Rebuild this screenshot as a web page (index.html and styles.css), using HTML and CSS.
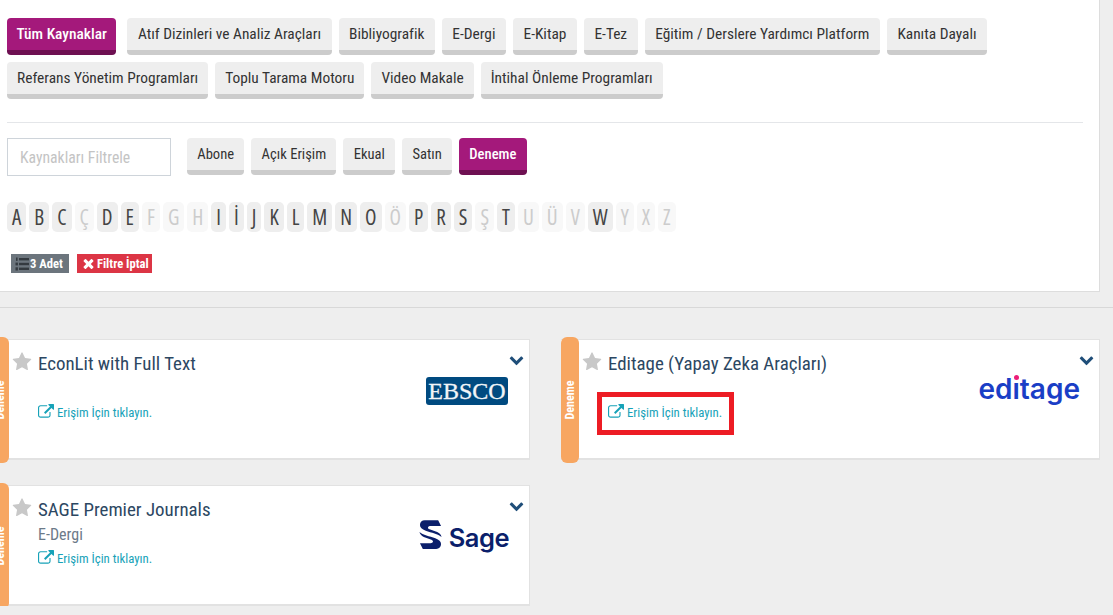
FILE: index.html
```html
<!DOCTYPE html>
<html lang="tr">
<head>
    <meta charset="UTF-8">
    <meta name="viewport" content="width=device-width, initial-scale=1.0">
    <title>Veri Tabanları</title>
    <link rel="stylesheet" href="styles.css">
</head>
<body>
    <svg class="icon-defs" aria-hidden="true">
        <symbol id="i-star" viewBox="0 0 1792 1792"><path d="M1728 647q0 22-26 48l-363 354 86 500q1 7 1 20 0 21-10.5 35.5t-30.5 14.5q-19 0-40-12l-449-236-449 236q-22 12-40 12-21 0-31.5-14.5t-10.5-35.5q0-6 2-20l86-500-364-354q-25-27-25-48 0-37 56-46l502-73 225-455q19-41 49-41t49 41l225 455 502 73q56 9 56 46z"/></symbol>
        <symbol id="i-chevron" viewBox="0 0 1792 1792"><path d="M1683 808l-742 741q-19 19-45 19t-45-19l-742-741q-19-19-19-45.5t19-45.5l166-165q19-19 45-19t45 19l531 531 531-531q19-19 45-19t45 19l166 165q19 19 19 45.5t-19 45.5z"/></symbol>
        <symbol id="i-link" viewBox="0 0 1792 1792"><path d="M1408 928v320q0 119-84.5 203.5t-203.5 84.5h-832q-119 0-203.5-84.5t-84.5-203.5v-832q0-119 84.5-203.5t203.5-84.5h704q14 0 23 9t9 23v64q0 14-9 23t-23 9h-704q-66 0-113 47t-47 113v832q0 66 47 113t113 47h832q66 0 113-47t47-113v-320q0-14 9-23t23-9h64q14 0 23 9t9 23zm384-864v512q0 26-19 45t-45 19-45-19l-176-176-652 652q-10 10-23 10t-23-10l-114-114q-10-10-10-23t10-23l652-652-176-176q-19-19-19-45t19-45 45-19h512q26 0 45 19t19 45z"/></symbol>
        <symbol id="i-times" viewBox="0 0 1792 1792"><path d="M1490 1322q0 40-28 68l-136 136q-28 28-68 28t-68-28l-294-294-294 294q-28 28-68 28t-68-28l-136-136q-28-28-28-68t28-68l294-294-294-294q-28-28-28-68t28-68l136-136q28-28 68-28t68 28l294 294 294-294q28-28 68-28t68 28l136 136q28 28 28 68t-28 68l-294 294 294 294q28 28 28 68z"/></symbol>
    </svg>

    <div class="panel">
        <div class="btn-row">
            <a class="btn active first">Tüm Kaynaklar</a>
            <a class="btn">Atıf Dizinleri ve Analiz Araçları</a>
            <a class="btn">Bibliyografik</a>
            <a class="btn">E-Dergi</a>
            <a class="btn">E-Kitap</a>
            <a class="btn">E-Tez</a>
            <a class="btn">Eğitim / Derslere Yardımcı Platform</a>
            <a class="btn">Kanıta Dayalı</a>
            <a class="btn">Referans Yönetim Programları</a>
            <a class="btn">Toplu Tarama Motoru</a>
            <a class="btn">Video Makale</a>
            <a class="btn">İntihal Önleme Programları</a>
        </div>

        <div class="divider"></div>

        <div class="filter-row">
            <input class="filter-input" type="text" placeholder="Kaynakları Filtrele">
            <a class="btn">Abone</a>
            <a class="btn">Açık Erişim</a>
            <a class="btn">Ekual</a>
            <a class="btn">Satın</a>
            <a class="btn active">Deneme</a>
        </div>

        <div class="letters">
            <a class="letter">A</a><a class="letter">B</a><a class="letter">C</a><a class="letter off">Ç</a><a class="letter">D</a><a class="letter">E</a><a class="letter off">F</a><a class="letter off">G</a><a class="letter off">H</a><a class="letter">I</a><a class="letter">İ</a><a class="letter">J</a><a class="letter">K</a><a class="letter">L</a><a class="letter">M</a><a class="letter">N</a><a class="letter">O</a><a class="letter off">Ö</a><a class="letter">P</a><a class="letter">R</a><a class="letter">S</a><a class="letter off">Ş</a><a class="letter">T</a><a class="letter off">U</a><a class="letter off">Ü</a><a class="letter off">V</a><a class="letter">W</a><a class="letter off">Y</a><a class="letter off">X</a><a class="letter off">Z</a>
        </div>

        <div class="badges">
            <span class="badge badge-gray">
                <svg class="list-icon" viewBox="0 0 14 14"><rect x="4" y="1" width="10" height="2.4"/><rect x="4" y="5.8" width="10" height="2.4"/><rect x="4" y="10.6" width="10" height="2.4"/><rect x="1" y="0.5" width="1.6" height="3.4"/><rect x="0.5" y="5.6" width="2.4" height="2.8"/><rect x="0.5" y="10.3" width="2.4" height="3.2"/></svg>
                3 Adet
            </span>
            <span class="badge badge-red">
                <svg class="times-icon"><use href="#i-times"/></svg>
                Filtre İptal
            </span>
        </div>
    </div>

    <div class="page-line"></div>

    <div class="cards">
        <div class="card">
            <div class="card-tag"><span>Deneme</span></div>
            <svg class="star"><use href="#i-star"/></svg>
            <div class="card-main">
                <div class="card-title">EconLit with Full Text</div>
                <div class="card-sub"></div>
                <a class="card-link"><svg class="link-icon"><use href="#i-link"/></svg>Erişim İçin tıklayın.</a>
            </div>
            <div class="card-side">
                <svg class="chevron"><use href="#i-chevron"/></svg>
                <div class="logo"><span class="logo-ebsco">EBSCO</span></div>
            </div>
        </div>

        <div class="card">
            <div class="card-tag"><span>Deneme</span></div>
            <svg class="star"><use href="#i-star"/></svg>
            <div class="card-main">
                <div class="card-title">Editage (Yapay Zeka Araçları)</div>
                <div class="card-sub"></div>
                <a class="card-link"><svg class="link-icon"><use href="#i-link"/></svg>Erişim İçin tıklayın.</a>
            </div>
            <div class="card-side">
                <svg class="chevron"><use href="#i-chevron"/></svg>
                <div class="logo logo-editage-wrap"><span class="logo-editage">editage<i class="editage-dot"></i></span></div>
            </div>
            <div class="highlight"></div>
        </div>

        <div class="card">
            <div class="card-tag"><span>Deneme</span></div>
            <svg class="star"><use href="#i-star"/></svg>
            <div class="card-main">
                <div class="card-title">SAGE Premier Journals</div>
                <div class="card-sub">E-Dergi</div>
                <a class="card-link"><svg class="link-icon"><use href="#i-link"/></svg>Erişim İçin tıklayın.</a>
            </div>
            <div class="card-side">
                <svg class="chevron"><use href="#i-chevron"/></svg>
                <div class="logo logo-sage-wrap">
                    <svg class="sage-mark" viewBox="0 0 24 31"><path d="M6 0.5 H20 L23 6.5 H12 C9 6.5 8.5 9 11 10 L19 13 C21.5 14 23 16 23.5 18 C20 15 13 13.5 7 11.5 C3 10 1 8 1 5.5 C1 2.5 3 0.5 6 0.5 Z"/><path d="M0.5 13 C4 16 11 17.5 17 19.5 C21 21 23 23 23 25.5 C23 28.5 21 30.5 18 30.5 H4 L1 24.5 H12 C15 24.5 15.5 22 13 21 L5 18 C2.5 17 1 15 0.5 13 Z"/></svg>
                    <span class="logo-sage">Sage</span>
                </div>
            </div>
        </div>
    </div>
</body>
</html>
```

FILE: styles.css
```css
* { box-sizing: border-box; }

body {
    margin: 0;
    background: #eee;
    font-family: "Roboto", "Open Sans", sans-serif;
    font-stretch: 75%;
    color: #333;
    overflow: hidden;
}

.icon-defs { display: none; }

.panel {
    width: 1100px;
    height: 292px;
    padding: 18px 7px 0;
    background: #fff;
    border-right: 1px solid #ddd;
    border-bottom: 1px solid #ddd;
}

.btn-row {
    display: flex;
    flex-wrap: wrap;
    gap: 7px;
    width: 1086px;
}

.btn {
    display: block;
    padding: 0 10px;
    height: 37px;
    line-height: 32px;
    font-size: 15.4px;
    color: #333;
    background: #eee;
    border-bottom: 5px solid #ccc;
    border-radius: 4px;
    white-space: nowrap;
}
.btn.active {
    color: #fff;
    font-weight: 500;
    background: #a4197b;
    border-bottom-color: #6e1052;
}
.btn-row .btn:nth-child(-n+8) { padding: 0 10.5px; }
.btn-row .btn.first {
    margin-right: 4px;
    padding: 0 9.5px;
}

.divider {
    width: 1076px;
    height: 1px;
    margin: 23px 0 15px;
    background: #e4e6e9;
}

.filter-row {
    display: flex;
    gap: 7px;
}
.filter-row .btn {
    padding: 0 10.25px;
    font-size: 14.6px;
    line-height: 33px;
}

.filter-input {
    width: 164px;
    height: 38px;
    margin-right: 9px;
    padding: 0 12px;
    font-family: inherit;
    font-stretch: inherit;
    font-size: 15.7px;
    background: #fff;
    border: 1px solid #ced4da;
    outline: none;
}
.filter-input::placeholder { color: #c4c4c4; }

.letters {
    display: flex;
    gap: 3px;
    margin-top: 26px;
    font-family: "Open Sans", sans-serif;
}

.letter {
    display: block;
    height: 30px;
    padding: 0 5px;
    line-height: 30px;
    font-size: 21px;
    color: #444;
    background: #eee;
    border-radius: 5px;
}
.letter.off {
    color: #ccc;
    background: #f8f8f8;
}

.badges {
    display: flex;
    gap: 8px;
    margin: 22px 0 0 4px;
}

.badge {
    display: flex;
    align-items: center;
    gap: 1px;
    height: 19px;
    padding: 0 4px;
    font-size: 12.6px;
    font-weight: 700;
    color: #fff;
}
.badge-gray {
    padding-right: 6px;
    background: #6c757d;
}
.badge-red {
    padding-right: 3px;
    background: #dc3545;
}

.list-icon {
    width: 14px;
    height: 14px;
    fill: #343a40;
}
.times-icon {
    width: 15px;
    height: 15px;
    fill: #fff;
}

.page-line {
    height: 1px;
    margin-top: 15px;
    background: #d8d8d8;
}

.cards {
    display: grid;
    grid-template-columns: 539px 539px;
    column-gap: 31px;
    row-gap: 25px;
    margin: 31px 0 0 -9px;
}

.card {
    position: relative;
    display: flex;
    height: 121px;
    padding-left: 21px;
    background: #fff;
    border: 1px solid #e2e2e2;
    border-bottom-width: 2px;
    border-left: none;
}

.card-tag {
    position: absolute;
    top: -3px;
    bottom: -5px;
    left: 0;
    width: 18px;
    display: flex;
    align-items: center;
    justify-content: center;
    background: #f7a661;
    border-radius: 6px;
}
.card-tag span {
    transform: rotate(-90deg);
    font-size: 12px;
    font-weight: 700;
    color: #fff;
}

.star {
    flex: none;
    width: 20px;
    height: 20px;
    margin-top: 12px;
    fill: #c8c8c8;
}

.card-main {
    flex: 1;
    margin-left: 6px;
    padding-top: 9px;
}

.card-title {
    height: 29px;
    line-height: 30px;
    font-size: 18.9px;
    color: #2c4762;
}

.card-sub {
    height: 21px;
    line-height: 21px;
    font-size: 16px;
    color: #6c7a89;
}

.card-link {
    display: flex;
    align-items: center;
    height: 26px;
    font-size: 12.8px;
    color: #17a2b8;
}

.link-icon {
    width: 16px;
    height: 16px;
    margin-right: 3px;
    fill: #17a2b8;
}

.card-side {
    flex: none;
    width: 110px;
    display: flex;
    flex-direction: column;
    align-items: flex-end;
    padding-right: 5px;
}

.chevron {
    width: 15px;
    height: 15px;
    margin-top: 12px;
    fill: #1f4e79;
}

.logo {
    display: flex;
    align-items: center;
    justify-content: flex-end;
    height: 34px;
    margin: 7px 16px 0 0;
}

.logo-ebsco {
    display: block;
    width: 82px;
    height: 28px;
    line-height: 28px;
    text-align: center;
    font-family: "Liberation Serif", serif;
    font-size: 24px;
    color: #f2f5f8;
    background: #004a80;
    border-radius: 3px;
    -webkit-text-stroke: 0.3px #f2f5f8;
}

.logo-editage-wrap { margin-right: 14px; }
.logo-editage {
    position: relative;
    margin-top: -4px;
    font-family: "Inter", sans-serif;
    font-stretch: normal;
    font-size: 28px;
    font-weight: 600;
    line-height: 30px;
    color: #1a3ec6;
}
.editage-dot {
    position: absolute;
    top: 1px;
    left: 36px;
    width: 5px;
    height: 5px;
    border-radius: 50%;
    background: #ec1e79;
    box-shadow: 0 0 0 2px #fff;
}

.logo-sage-wrap {
    gap: 7px;
    margin: 7px 15px 0 0;
}
.sage-mark {
    width: 23px;
    height: 31px;
    margin-top: -5px;
    fill: #0b1f6b;
}
.logo-sage {
    font-family: "Inter", sans-serif;
    font-stretch: normal;
    font-size: 25.5px;
    font-weight: 600;
    letter-spacing: -0.5px;
    color: #0b1f6b;
}

.highlight {
    position: absolute;
    top: 52px;
    left: 36px;
    width: 137px;
    height: 43px;
    border: 5px solid #ed1c24;
}
```
